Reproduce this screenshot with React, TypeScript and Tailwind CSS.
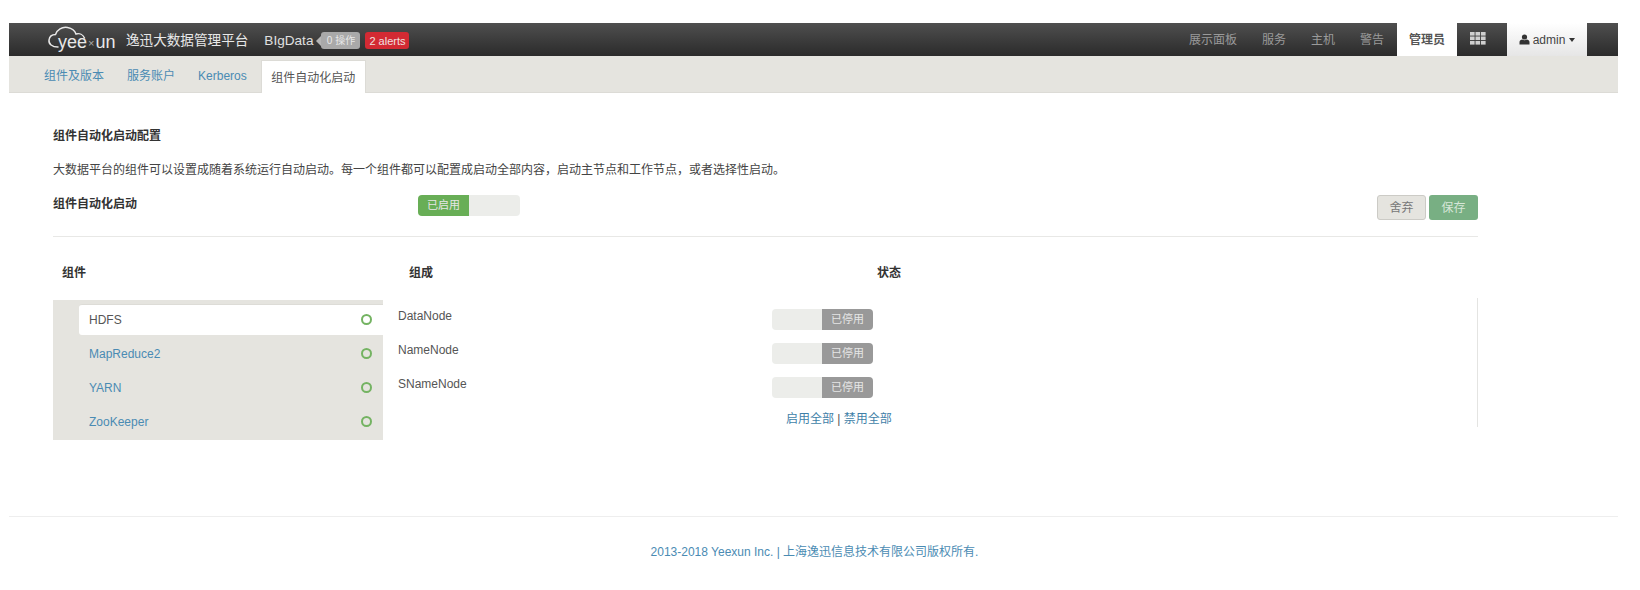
const blue = "text-[#4a8bb3]";

function Logo() {
  return (
    <div className="relative h-[33px] w-[84px] shrink-0">
      <svg className="absolute left-0 top-0" width="50" height="33" viewBox="0 0 50 33" fill="none" stroke="#e8e8e8" strokeWidth="1.5" strokeLinecap="round">
        <path d="M11 24 C5 24 1.5 21 2 17 C2.5 13.5 5 11.5 8.5 11.5 C10 7 15 3.5 20.5 4.5 C25 5.3 28 8 29 11 C32.5 10 36 11.5 37.5 15" />
      </svg>
      <span className="absolute left-[11px] top-[7px] font-['Liberation_Sans',sans-serif] text-[18px] leading-[24px] tracking-[0px] text-[#e8e8e8] whitespace-nowrap">
        yee<span className="mx-[1px] text-[11px] align-[1px] text-[#aaaaaa]">×</span>un
      </span>
    </div>
  );
}

function Toggle({ on }: { on: boolean }) {
  const label = (
    <span className={`flex w-[51px] items-center justify-center text-[11px] text-[#e6e6e6] ${on ? "bg-[#68ae56]" : "bg-[#999999]"}`}>
      {on ? "已启用" : "已停用"}
    </span>
  );
  const blank = <span className="flex-1 bg-[#ecedea]" />;
  return (
    <div className={`flex h-[21px] overflow-hidden rounded-[4px] ${on ? "w-[102px]" : "w-[101px]"}`}>
      {on ? label : blank}
      {on ? blank : label}
    </div>
  );
}

function GridIcon() {
  return (
    <svg width="16" height="13" viewBox="0 0 16 13" fill="#cfcfcf">
      {[0, 4.5, 9].map((y) =>
        [0, 5.5, 11].map((x) => <rect key={`${x}-${y}`} x={x} y={y} width="4.6" height="3.6" />)
      )}
    </svg>
  );
}

function Ring() {
  return <span className="mb-[1px] mr-[11px] h-[11px] w-[11px] rounded-full border-2 border-[#74b362]" />;
}

export default function App() {
  const font = "font-['Liberation_Sans','Noto_Sans_CJK_SC',sans-serif]";
  return (
    <div className={`${font} h-[590px] w-[1640px] overflow-hidden bg-white pl-[9px] pr-[22px] pt-[23px] text-[12px] text-[#555555]`}>
      <header className="flex h-[33px] items-stretch bg-gradient-to-b from-[#4f4f4f] to-[#2b2b2b]">
        <div className="ml-[38px] flex items-center">
          <Logo />
          <div className="ml-[-5px] mt-[3px] flex items-center">
            <span className="text-[13.6px] text-[#e8e8e8]">逸迅大数据管理平台</span>
            <span className="ml-[16px] text-[13.6px] text-[#e0e0e0]">BIgData</span>
            <span className="ml-[3px] h-0 w-0 border-y-[5px] border-r-[5px] border-y-transparent border-r-[#b5b5b5]" />
            <span className="flex h-[17px] w-[39px] items-center justify-center rounded-[3px] bg-[#a9a9a9] text-[10px] text-[#e8e8e8]">0 操作</span>
            <span className="ml-[5px] flex h-[17px] w-[44px] items-center justify-center rounded-[3px] bg-[#d32a33] text-[11px] text-[#f0e0e0]">2 alerts</span>
          </div>
        </div>
        <nav className="ml-auto flex items-stretch text-[#9a9a9a]">
          <span className="flex items-center">展示面板</span>
          <span className="ml-[25px] flex items-center">服务</span>
          <span className="ml-[25px] flex items-center">主机</span>
          <span className="ml-[25px] flex items-center">警告</span>
          <span className="ml-[13px] flex w-[60px] items-center justify-center bg-white font-bold text-[#555555]">管理员</span>
          <span className="ml-[13px] mb-[2px] flex items-center"><GridIcon /></span>
          <span className="ml-[21px] flex w-[80px] items-center justify-center gap-[3px] bg-gradient-to-b from-[#ffffff] to-[#e6e6e6] text-[#444444]">
            <svg width="11" height="11" viewBox="0 0 11 11" fill="#333333">
              <circle cx="5.5" cy="3" r="2.6" />
              <path d="M0.5 10.5 V8 C0.5 6.3 2 5.6 3.2 5.4 C4.5 6.4 6.5 6.4 7.8 5.4 C9 5.6 10.5 6.3 10.5 8 V10.5 Z" />
            </svg>
            admin
            <span className="ml-[1px] h-0 w-0 border-x-[3.5px] border-t-[4px] border-x-transparent border-t-[#333333]" />
          </span>
          <span className="w-[31px]" />
        </nav>
      </header>

      <div className="flex h-[37px] items-end border-b border-[#dcdbd6] bg-[#e5e4df] pl-[35px]">
        <span className={`${blue} mb-[7px]`}>组件及版本</span>
        <span className={`${blue} mb-[7px] ml-[23px]`}>服务账户</span>
        <span className={`${blue} mb-[7px] ml-[23px]`}>Kerberos</span>
        <span className="ml-[14px] mb-[-1px] flex h-[33px] w-[105px] items-center justify-center border-x border-t border-[#dcdbd6] bg-white pt-[2px]">组件自动化启动</span>
      </div>

      <main className="ml-[44px] w-[1425px]">
        <h2 className="mt-[36px] text-[12px] font-bold leading-[14px] text-[#333333]">组件自动化启动配置</h2>
        <p className="mt-[20px] leading-[14px] text-[#444444]">
          大数据平台的组件可以设置成随着系统运行自动启动。每一个组件都可以配置成启动全部内容，启动主节点和工作节点，或者选择性启动。
        </p>
        <div className="mt-[17px] flex h-[42px] items-start">
          <b className="mt-[3px] w-[365px] leading-[14px] text-[#333333]">组件自动化启动</b>
          <div className="mt-[1px]"><Toggle on /></div>
          <button className="ml-auto mt-[1px] flex h-[25px] w-[49px] items-center justify-center rounded-[3px] border border-[#cccbc6] bg-[#e5e4df] text-[#777777]">舍弃</button>
          <button className="ml-[3px] mt-[1px] flex h-[25px] w-[49px] items-center justify-center rounded-[3px] bg-[#78af83] text-[#d6e6d8]">保存</button>
        </div>
        <hr className="border-0 border-t border-[#e8e8e6]" />

        <div className="mt-[29px] flex font-bold leading-[14px] text-[#333333]">
          <span className="ml-[9px] w-[347px]">组件</span>
          <span className="w-[468px]">组成</span>
          <span>状态</span>
        </div>

        <div className="mt-[20px] flex">
          <ul className="flex h-[140px] w-[330px] flex-col bg-[#e5e4df] pt-[4px]">
            <li className="ml-[26px] flex h-[31px] items-center justify-between rounded-l-[3px] border-t border-[#dddcd7] bg-white pl-[10px]">
              <span>HDFS</span><Ring />
            </li>
            {["MapReduce2", "YARN", "ZooKeeper"].map((name) => (
              <li key={name} className="ml-[26px] mt-[3px] flex h-[31px] items-center justify-between pl-[10px]">
                <span className={blue}>{name}</span><Ring />
              </li>
            ))}
          </ul>
          <div className="-mt-[2px] flex h-[129px] flex-1 border-r border-[#e4e4e2] pl-[15px]">
            <div className="flex w-[374px] flex-col">
              {["DataNode", "NameNode", "SNameNode"].map((n) => (
                <div key={n} className="flex h-[34px] items-start pt-[4px]">
                  <span className="mt-[7px] w-[374px] shrink-0 leading-[14px]">{n}</span>
                  <div className="mt-[7px] shrink-0"><Toggle on={false} /></div>
                </div>
              ))}
              <div className="ml-[374px] mt-[12px] w-[140px] whitespace-nowrap pl-[14px] leading-[14px]">
                <span className="text-[#3f7fa8]">启用全部</span> | <span className="text-[#3f7fa8]">禁用全部</span>
              </div>
            </div>
          </div>
        </div>
      </main>

      <footer className="mt-[76px] border-t border-[#eeeeee] pt-[28px] text-center leading-[14px] text-[#4a8bb3]">
        <span className="ml-[2px]">2013-2018 Yeexun Inc. | 上海逸迅信息技术有限公司版权所有.</span>
      </footer>
    </div>
  );
}
